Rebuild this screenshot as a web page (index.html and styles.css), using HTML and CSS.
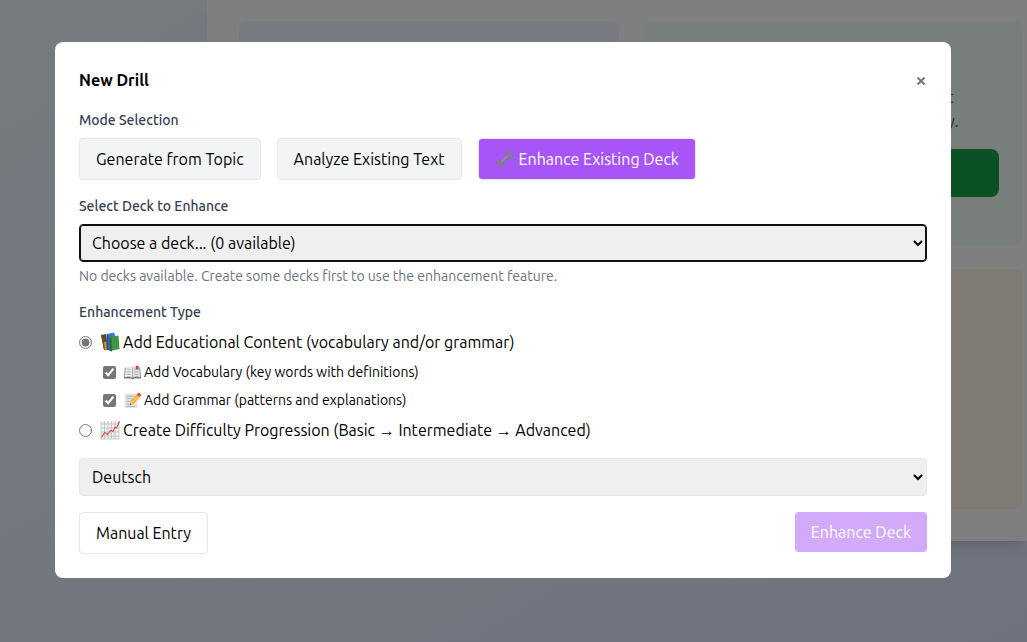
FILE: index.html
```html
<!DOCTYPE html>
<html lang="en">
<head>
<meta charset="utf-8">
<meta name="viewport" content="width=device-width, initial-scale=1">
<title>New Drill</title>
<link rel="stylesheet" href="styles.css">
</head>
<body>
<div class="page">
  <main class="board">
    <section class="card card-blue"></section>
    <section class="card card-green">
      <p class="card-text">t<br>y.</p>
      <div class="card-action"></div>
    </section>
    <section class="card card-plain"></section>
    <section class="card card-orange"></section>
  </main>
</div>

<div class="overlay">
  <form class="modal" role="dialog" aria-labelledby="title">
    <header class="modal-head">
      <h1 class="title" id="title">New Drill</h1>
      <button class="close" type="button" aria-label="Close">
        <svg class="close-icon" viewBox="0 0 12 12" aria-hidden="true"><path d="m2.5 3.5 7 7m0-7-7 7" fill="none" stroke="currentColor" stroke-width="1.8"/></svg>
      </button>
    </header>

    <section class="group">
      <h2 class="label">Mode Selection</h2>
      <div class="modes">
        <button class="btn btn-mode" type="button">Generate from Topic</button>
        <button class="btn btn-mode" type="button">Analyze Existing Text</button>
        <button class="btn btn-mode btn-active" type="button">
          <svg class="icon" viewBox="0 0 20 20" aria-hidden="true"><g fill="none" stroke="#78807c"><path d="M5.5 14.5 14 6.5" stroke-width="3"/><path d="M15.8 2.4a3 3 0 1 0 2.4 3.6M1.4 14.6a2.6 2.6 0 1 1 2.8 3.6" stroke-width="2.4"/></g><path d="m6 13.2 7-6.5" stroke="#9da39f" stroke-width="1"/></svg>
          <span>Enhance Existing Deck</span>
        </button>
      </div>
    </section>

    <section class="group">
      <label class="label" for="deck">Select Deck to Enhance</label>
      <select class="select select-focus" id="deck"><option>Choose a deck... (0 available)</option></select>
      <p class="help">No decks available. Create some decks first to use the enhancement feature.</p>
    </section>

    <fieldset class="group options">
      <legend class="label">Enhancement Type</legend>
      <label class="option">
        <input class="tick" type="radio" name="type" checked>
        <span class="caption">
          <svg class="icon" viewBox="0 0 20 20" aria-hidden="true"><path d="m1 3 5-1 2 15-4 1Z" fill="#494b4b"/><path d="m1 3 1.5-.4L5.5 17l-1.5 1Z" fill="#75511f"/><path d="m4 10 2.5-.5 1 8.5-2.5.5Z" fill="#ef8b1d"/><path d="m7 2 7-1.500 1 3v12l-7 3Z" fill="#3977d2"/><path d="m6.500 2 2 1.500v15l-2-1Z" fill="#23539b"/><path d="m10 5 8.500-1.500 1 13.500-9 2Z" fill="#3e9646"/><path d="m9.500 5 2 1 .5 13.500-2.500-.5Z" fill="#286d36"/></svg>
          <span>Add Educational Content (vocabulary and/or grammar)</span>
        </span>
      </label>
      <div class="suboptions">
        <label class="option option-small">
          <input class="tick" type="checkbox" checked>
          <span class="caption">
            <svg class="icon" viewBox="0 0 20 20" aria-hidden="true"><path d="M1 4h18l1 13h-8l-2 1-2-1H0Z" fill="#777b7d"/><path d="M2 3c3-1 6-.7 8 1v12c-3-1.500-6-1.500-9-.5Z" fill="#eceeed"/><path d="M18 3c-3-1-6-.7-8 1v12c3-1.500 6-1.500 9-.5Z" fill="#dfe2e2"/><path d="M10 4v12M3 6l5 .4M3 9l5 .4M3 12l5 .4M12 6.400l5-.4M12 9.400l5-.4M12 12.400l5-.4" stroke="#a5aaac" stroke-width="1"/><path d="M14 2h3v5l-1.500-1L14 7Z" fill="#e23b39"/></svg>
            <span>Add Vocabulary (key words with definitions)</span>
          </span>
        </label>
        <label class="option option-small">
          <input class="tick" type="checkbox" checked>
          <span class="caption">
            <svg class="icon" viewBox="0 0 20 20" aria-hidden="true"><path d="M1 2h15v17H1Z" fill="#dfe3e5"/><path d="M3 5h9M3 8h8M3 11h5M3 14h4M3 17h10" stroke="#a7aeb1" stroke-width="1"/><path d="m7 15 1-4 7-8 3.500 3-7.500 8Z" fill="#f5a51c"/><path d="m8 12 8-8 1.500 1.500L9.500 13.500Z" fill="#ffcc45"/><path d="m15 3 2-2c1-.5 3.500 1.500 3 3l-2 2Z" fill="#dd4b43"/><path d="m7 15 1-4 3 3Z" fill="#efc294"/><path d="m7 15 .4-1.800 1.500 1.400Z" fill="#333"/></svg>
            <span>Add Grammar (patterns and explanations)</span>
          </span>
        </label>
      </div>
      <label class="option">
        <input class="tick" type="radio" name="type">
        <span class="caption">
          <svg class="icon" viewBox="0 0 20 20" aria-hidden="true"><path d="M1 1h18v18H1Z" fill="#f1f3f3"/><path d="M1 1v18h18V1M4.500 1v18M8 1v18M11.500 1v18M15 1v18M1 4h18M1 8h18M1 12h18M1 16h18" fill="none" stroke="#b8bdbf" stroke-width=".8"/><path d="m1.500 17.500 3-5 3 2 3-4 2.500 1L15 7l1.500 1 3-6.500" fill="none" stroke="#e34b3e" stroke-width="1.1"/></svg>
          <span>Create Difficulty Progression (Basic → Intermediate → Advanced)</span>
        </span>
      </label>
    </fieldset>

    <select class="select" aria-label="Language"><option>Deutsch</option></select>

    <footer class="actions">
      <button class="btn" type="button">Manual Entry</button>
      <button class="btn btn-submit" type="submit" disabled>Enhance Deck</button>
    </footer>
  </form>
</div>
</body>
</html>
```
FILE: styles.css
```css
* { box-sizing: border-box; }

body {
  margin: 0;
  min-height: 100vh;
  overflow: hidden;
  font: 16px/24px Ubuntu, "Open Sans", "Noto Sans", sans-serif;
  color: #000;
}

h1, h2, p { margin: 0; }
button, select, input { font: inherit; color: inherit; }

.page {
  min-height: 100vh;
  padding-left: 207px;
  background: linear-gradient(to bottom right, #eff6ff, #e0e7ff);
}

.board {
  display: grid;
  grid-template-columns: 1fr 1fr;
  grid-template-rows: 224px 240px;
  gap: 24px;
  padding: 21px 4px 32px 32px;
  background: #fff;
  box-shadow: 0 10px 15px -3px rgba(0, 0, 0, .1), 0 4px 6px -4px rgba(0, 0, 0, .1);
}

.card { padding: 24px; border-radius: 8px; }
.card-blue { background: #eff6ff; }
.card-green { background: #f0fdf4; }
.card-plain { background: #faf5ff; }
.card-orange { background: #fef6e6; }
.card-text { padding: 40px 0 16px 280px; color: #15803d; }
.card-action { height: 48px; border-radius: 8px; background: #16a34a; }

.overlay {
  position: fixed;
  inset: 0;
  display: flex;
  align-items: center;
  justify-content: center;
  padding: 0 21px 22px 0;
  background: rgba(0, 0, 0, .5);
}

.modal {
  display: flex;
  flex-direction: column;
  gap: 16px;
  width: 100%;
  max-width: 896px;
  padding: 24px;
  border-radius: 8px;
  background: #fff;
}

.modal-head {
  display: flex;
  align-items: center;
  justify-content: space-between;
  min-height: 28px;
}

.title { font-size: 16px; font-weight: 700; }

.close {
  display: flex;
  padding: 0;
  border: 0;
  background: none;
  color: #6b7280;
}

.close-icon { width: 12px; height: 12px; }

.label {
  display: block;
  margin-bottom: 8px;
  padding: 0;
  color: #374151;
  font-size: 14px;
  font-weight: 500;
  line-height: 20px;
}

.modes { display: flex; gap: 16px; }

.btn {
  display: flex;
  align-items: center;
  gap: 4px;
  padding: 8px 16px;
  border: 1px solid #e5e7eb;
  border-radius: 4px;
  background: #fff;
}

.btn-mode { background: #f3f4f6; }
.btn-active { background: #a855f7; color: #fff; }

.select {
  display: block;
  width: 100%;
  height: 38px;
  padding: 0 8px;
  border: 1px solid #e5e7eb;
  border-radius: 4px;
  background: #efefef;
}

.select-focus {
  border-color: #101010;
  outline: none;
  box-shadow: inset 0 0 0 1px #101010;
}

.help {
  margin-top: 4px;
  color: #6b7280;
  font-size: 14px;
  line-height: 20px;
}

.options { min-width: 0; margin: 0; padding: 0; border: 0; }

.option { display: flex; align-items: center; gap: 8px; height: 24px; }
.option-small { height: 20px; font-size: 14px; line-height: 20px; }
.caption { display: flex; align-items: center; gap: 3px; }
.tick { width: 13px; height: 13px; margin: 0; accent-color: #767676; }

.suboptions {
  display: grid;
  gap: 8px;
  padding: 8px 0 8px 24px;
}

.icon { flex: none; width: 20px; height: 20px; }
.option-small .icon { width: 17px; height: 17px; }

.actions {
  display: flex;
  align-items: flex-start;
  justify-content: space-between;
}

.btn-submit {
  border: 0;
  background: #a855f7;
  color: #fff;
  opacity: .5;
}
```
